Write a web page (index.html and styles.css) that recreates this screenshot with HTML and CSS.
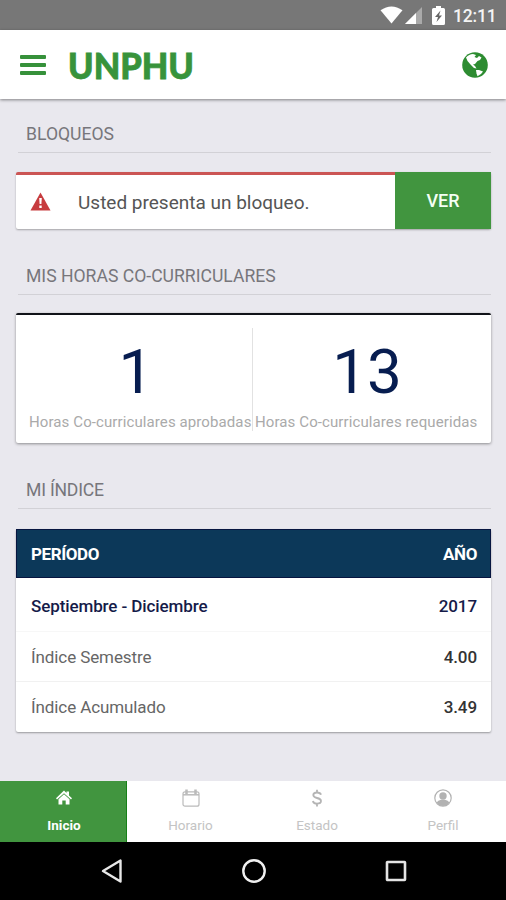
FILE: index.html
```html
<!DOCTYPE html>
<html lang="es">
<head>
<meta charset="utf-8">
<title>UNPHU</title>
<link rel="stylesheet" href="styles.css">
</head>
<body>
<div class="status">
  <svg class="wifi" width="23" height="18" viewBox="0 0 23 18"><path d="M0.5 4.2Q11.5-3.4 22.5 4.2L11.5 17.5Z" fill="#fff"/></svg>
  <svg class="signal" width="17" height="17" viewBox="0 0 17 17"><path d="M0 17L17 0V17Z" fill="#aaa"/><path d="M0 17L11 6V17Z" fill="#fff"/></svg>
  <svg class="battery" width="13" height="19" viewBox="0 0 13 19"><path d="M4 0H9V2H11.5Q13 2 13 3.5V17.5Q13 19 11.5 19H1.5Q0 19 0 17.5V3.5Q0 2 1.5 2H4Z" fill="#fff"/><path d="M8.5 4.5L3 11H6L4.5 16L10 9.500H7Z" fill="#666"/></svg>
  <span class="clock">12:11</span>
</div>
<header class="header">
  <div class="menu"><i></i><i></i><i></i></div>
  <svg class="brand" width="136" height="50" viewBox="0 0 136 50"><text x="0" y="39" textLength="126" lengthAdjust="spacingAndGlyphs">UNPHU</text></svg>
  <svg class="globe" width="26" height="26" viewBox="0 0 26 26"><circle cx="13" cy="13" r="12.800" fill="#2d8c31"/><path d="M4 5.500Q7 2 11 2L14 3L12.500 5L15 6L17 4L19.500 5.500L18 8L15.500 9L13 12L11 12.500L13 14L14.500 16.500L12 16L8.500 12.500L5.500 9Z" fill="#fff"/><path d="M14 18L17 18L21 19.500L19 22L15.500 24.200L14.500 21.500Z" fill="#fff"/></svg>
</header>
<main class="main">
  <h2 class="heading">BLOQUEOS</h2>
  <section class="alert">
    <svg class="warn" width="21" height="19" viewBox="0 0 21 19"><path d="M10.500 0.500L20.500 18.500H0.500Z" fill="#c73c3f"/><path d="M9.200 6H11.800L11.400 12H9.600ZM9.300 13.500H11.700V16H9.300Z" fill="#fff"/></svg>
    <p class="alert-text">Usted presenta un bloqueo.</p>
    <button class="ver">VER</button>
  </section>
  <h2 class="heading hours-heading">MIS HORAS CO-CURRICULARES</h2>
  <section class="hours">
    <div class="stat approved"><b>1</b><span>Horas Co-curriculares aprobadas</span></div>
    <div class="stat required"><b>13</b><span>Horas Co-curriculares requeridas</span></div>
  </section>
  <h2 class="heading index-heading">MI ÍNDICE</h2>
  <section class="index">
    <div class="row head"><span>PERÍODO</span><b>AÑO</b></div>
    <div class="row term"><span>Septiembre - Diciembre</span><b>2017</b></div>
    <div class="row semester"><span>Índice Semestre</span><b>4.00</b></div>
    <div class="row total"><span>Índice Acumulado</span><b>3.49</b></div>
  </section>
</main>
<nav class="tabs">
  <div class="tab active">
    <svg width="18" height="18" viewBox="0 0 18 18"><path d="M9 1.500L11.500 4V2.500H14V6.500L17 9.300L16 10.500L9 4.300L2 10.500L1 9.300Z" fill="#fff"/><path d="M3.500 10.300L9 5.200L14.500 10.300V15.500H10.700V11.500H7.300V15.500H3.500Z" fill="#fff"/></svg>
    <span>Inicio</span>
  </div>
  <div class="tab">
    <svg width="18" height="18" viewBox="0 0 18 18" fill="none" stroke="#bbb"><rect x="1" y="2.800" width="16" height="14.400" rx="2" stroke-width="1.200"/><path d="M1 5.800H17" stroke-width="1.500"/><path d="M4.500 0.500V5M13.500 0.500V5" stroke-width="2.500"/></svg>
    <span>Horario</span>
  </div>
  <div class="tab">
    <svg width="18" height="18" viewBox="0 0 18 18" fill="none" stroke="#b4b4b4" stroke-width="1.800"><path d="M13 5.700Q12.300 3.500 9 3.500Q5.300 3.500 5.300 6.100Q5.300 8.200 9 9Q13 9.800 13 12.100Q13 14.700 9 14.700Q5.400 14.700 4.900 12M9 0.800V4M9 14.500V17.500"/></svg>
    <span>Estado</span>
  </div>
  <div class="tab">
    <svg width="18" height="18" viewBox="0 0 18 18"><circle cx="9" cy="9" r="8.200" fill="none" stroke="#b2b2b2" stroke-width="1.200"/><circle cx="9" cy="7" r="3.700" fill="#b2b2b2"/><path d="M2.500 13.500Q4 11.200 7 10.700H11Q14 11.200 15.500 13.500Q13 17 9 17Q5 17 2.500 13.500Z" fill="#b2b2b2"/></svg>
    <span>Perfil</span>
  </div>
</nav>
<footer class="system">
  <svg width="24" height="26" viewBox="0 0 24 26"><path d="M20.500 2.500V23.500L3 13Z" fill="none" stroke="#e8e8e8" stroke-width="2.400" stroke-linejoin="round"/></svg>
  <svg width="24" height="26" viewBox="0 0 24 26"><circle cx="12" cy="13" r="10.700" fill="none" stroke="#f0f0f0" stroke-width="2.400"/></svg>
  <svg width="24" height="26" viewBox="0 0 24 26"><rect x="3" y="4" width="18" height="18" rx="0.500" fill="none" stroke="#e4e4e4" stroke-width="2.600"/></svg>
</footer>
</body>
</html>
```

FILE: styles.css
```css
* { box-sizing: border-box; }
body {
  margin: 0;
  width: 506px;
  height: 900px;
  display: flex;
  flex-direction: column;
  overflow: hidden;
  background: #e9e8ee;
  font-family: Roboto, "Liberation Sans", sans-serif;
}
svg { display: block; flex: none; }
.status {
  height: 30px;
  background: #777;
  display: flex;
  align-items: flex-start;
  justify-content: flex-end;
  padding-right: 9px;
}
.wifi { margin: 6px 2px 0 0; }
.signal { margin: 7px 10px 0 0; }
.battery { margin: 6px 8px 0 0; }
.clock {
  width: 44px;
  margin-top: 6px;
  font-size: 17.5px;
  line-height: 20px;
  letter-spacing: -.2px;
  font-weight: 500;
  color: #f4f4f4;
  white-space: nowrap;
}
.header {
  height: 69px;
  background: #fff;
  display: flex;
  align-items: center;
  padding: 0 18px 0 20px;
  box-shadow: 0 1px 3px rgba(0, 0, 0, .45);
}
.menu { width: 26px; display: grid; gap: 4px; }
.menu i { height: 4px; background: #36913a; border-radius: 1px; }
.brand {
  margin-left: 22px;
  fill: #38933b;
  stroke: #38933b;
  stroke-width: .8px;
  font: 900 36px Lato, sans-serif;
}
.globe { margin-left: auto; }
.main { height: 682px; padding: 15px 15px 0 16px; }
.heading {
  margin: 0 0 19px 2px;
  padding-left: 8px;
  height: 39px;
  border-bottom: 1px solid #d2d1d6;
  font-size: 17.6px;
  line-height: 41px;
  font-weight: 400;
  color: #77767b;
}
.alert {
  height: 57px;
  display: flex;
  align-items: center;
  background: #fff;
  border-radius: 2px;
  border-top: 3px solid #cb5554;
  box-shadow: 0 1px 2px rgba(0, 0, 0, .3);
}
.warn { margin: -2px 0 0 14px; }
.alert-text { margin: 1px 0 0 27px; font-size: 19px; color: #555; white-space: nowrap; }
.ver {
  margin: -3px 0 0 auto;
  width: 96px;
  height: 57px;
  border: 0;
  padding: 0;
  background: #41953f;
  color: #f4fff4;
  font: 500 18px Roboto, sans-serif;
}
.hours-heading { margin-top: 27px; margin-bottom: 18px; }
.hours {
  height: 130px;
  display: grid;
  grid-template-columns: 236px 1fr;
  padding-top: 13px;
  background: #fff;
  border-top: 2px solid #111319;
  border-radius: 2px;
  box-shadow: 0 1px 3px rgba(0, 0, 0, .4);
}
.stat { height: 103px; display: flex; flex-direction: column; }
.stat b { margin-top: 11px; font-size: 62px; line-height: 66px; font-weight: 400; text-align: center; color: #071d50; }
.stat span { margin-top: 7px; font-size: 15px; line-height: 20px; letter-spacing: .1px; color: #aaa; white-space: nowrap; }
.approved b { padding-left: 4px; }
.approved span { padding-left: 13px; }
.required { border-left: 1px solid #e2e2e2; padding-left: 2px; }
.required b { margin-right: 12px; }
.index-heading { margin-top: 27px; margin-bottom: 20px; letter-spacing: -.2px; }
.index { background: #fff; border-radius: 2px; box-shadow: 0 1px 2px rgba(0, 0, 0, .35); }
.row {
  height: 50px;
  display: flex;
  align-items: center;
  justify-content: space-between;
  padding: 0 14px 0 15px;
  font-size: 17px;
  letter-spacing: -.1px;
  color: #666;
}
.row b { font-weight: 500; color: #333; }
.row.head { height: 49px; padding: 1px 13px 0 14px; background: #0c3859; border: 1px solid #071540; color: #fff; font-weight: 700; letter-spacing: -.4px; }
.row.head b { color: #fff; font-weight: 700; }
.row.term { height: 54px; padding-top: 3px; font-weight: 500; border-bottom: 1px solid #f7f7f7; }
.row.term, .row.term b { color: #151b49; }
.semester { border-bottom: 1px solid #f1f1f1; }
.tabs { height: 61px; background: #fff; display: grid; grid-template-columns: 127px 127px 126px 126px; }
.tab { display: flex; flex-direction: column; align-items: center; padding-top: 8px; color: #c4c4c4; }
.tab span { margin-top: 9px; font-size: 13.5px; line-height: 18px; }
.active { padding-left: 2px; background: #41953f; border-right: 1px solid #168017; color: #fff; font-weight: 700; }
.system { height: 58px; background: #000; display: flex; justify-content: space-between; align-items: center; padding: 0 98px 0 100px; }
```
